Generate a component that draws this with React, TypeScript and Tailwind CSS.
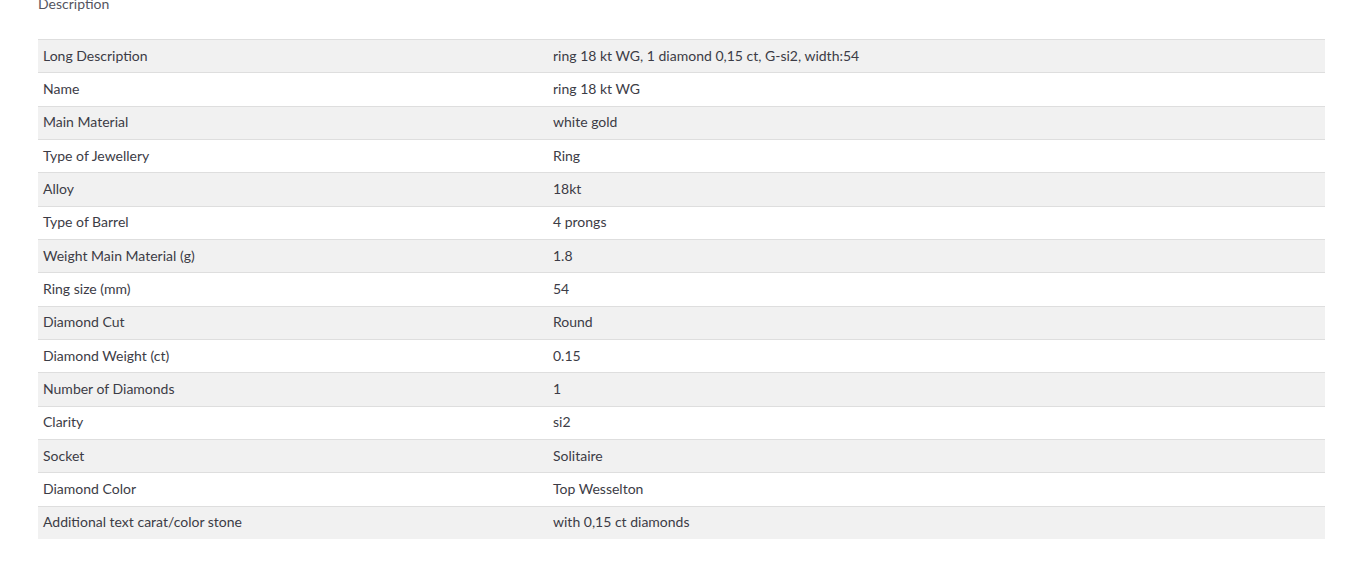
const rows: [string, string][] = [
  ["Long Description", "ring 18 kt WG, 1 diamond 0,15 ct, G-si2, width:54"],
  ["Name", "ring 18 kt WG"],
  ["Main Material", "white gold"],
  ["Type of Jewellery", "Ring"],
  ["Alloy", "18kt"],
  ["Type of Barrel", "4 prongs"],
  ["Weight Main Material (g)", "1.8"],
  ["Ring size (mm)", "54"],
  ["Diamond Cut", "Round"],
  ["Diamond Weight (ct)", "0.15"],
  ["Number of Diamonds", "1"],
  ["Clarity", "si2"],
  ["Socket", "Solitaire"],
  ["Diamond Color", "Top Wesselton"],
  ["Additional text carat/color stone", "with 0,15 ct diamonds"],
];

export default function App() {
  return (
    <div className="h-[570px] w-full bg-white font-['Lato','Open_Sans',sans-serif] text-[14px] text-[#3c3c46]">
      <div className="ml-[38px] mr-[37px] -mt-[6px]">
        <h2 className="h-[45px] text-[14px] leading-[20px] text-[#55555f]">Description</h2>
        <div className="flex flex-col">
          {rows.map(([label, value], i) => (
            <div
              key={label}
              className={`flex h-[33.34px] items-center border-t border-[#dedede] pb-[2px] ${
                i % 2 === 0 ? "bg-[#f1f1f1]" : "bg-white"
              }`}
            >
              <div className="w-[515px] pl-[5px]">{label}</div>
              <div className="flex-1">{value}</div>
            </div>
          ))}
        </div>
      </div>
    </div>
  );
}
